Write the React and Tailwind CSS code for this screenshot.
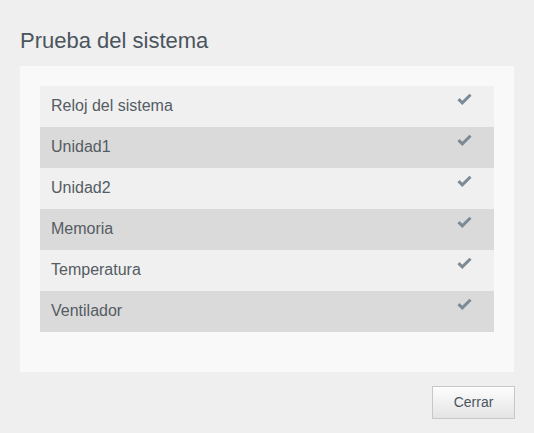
const items = ['Reloj del sistema', 'Unidad1', 'Unidad2', 'Memoria', 'Temperatura', 'Ventilador'];

const Check = () => (
  <svg width="15" height="12" viewBox="0 0 15 12" className="mt-[7px] mr-[22px] shrink-0">
    <path d="M1.5 6.2 L5.3 9.8 L13.5 1.8" fill="none" stroke="#7c8a95" strokeWidth="3" strokeLinejoin="miter" />
  </svg>
);

export default function App() {
  return (
    <div className="w-[534px] h-[433px] bg-[#efefef] font-['Liberation_Sans',Arial,sans-serif] px-5 pt-[27px]">
      <h1 className="text-[22px] leading-[28px] text-[#4b555d] h-[39px]">Prueba del sistema</h1>

      <div className="bg-[#f9f9f9] w-[494px] px-5 pt-5 pb-10">
        {items.map((item, i) => (
          <div
            key={item}
            className={`flex items-start justify-between h-[41px] ${i % 2 === 0 ? 'bg-[#f0f0f0]' : 'bg-[#dadada]'}`}
          >
            <span className="pl-[11px] pt-[10px] text-[16px] leading-[20px] text-[#555c63]">{item}</span>
            <Check />
          </div>
        ))}
      </div>

      <div className="flex justify-end mt-[14px]">
        <button className="w-[83px] h-[33px] border border-[#c8c8c8] bg-gradient-to-b from-[#fdfdfd] to-[#e4e4e4] text-[14px] text-[#4b555d] mr-[-1px]">
          Cerrar
        </button>
      </div>
    </div>
  );
}
